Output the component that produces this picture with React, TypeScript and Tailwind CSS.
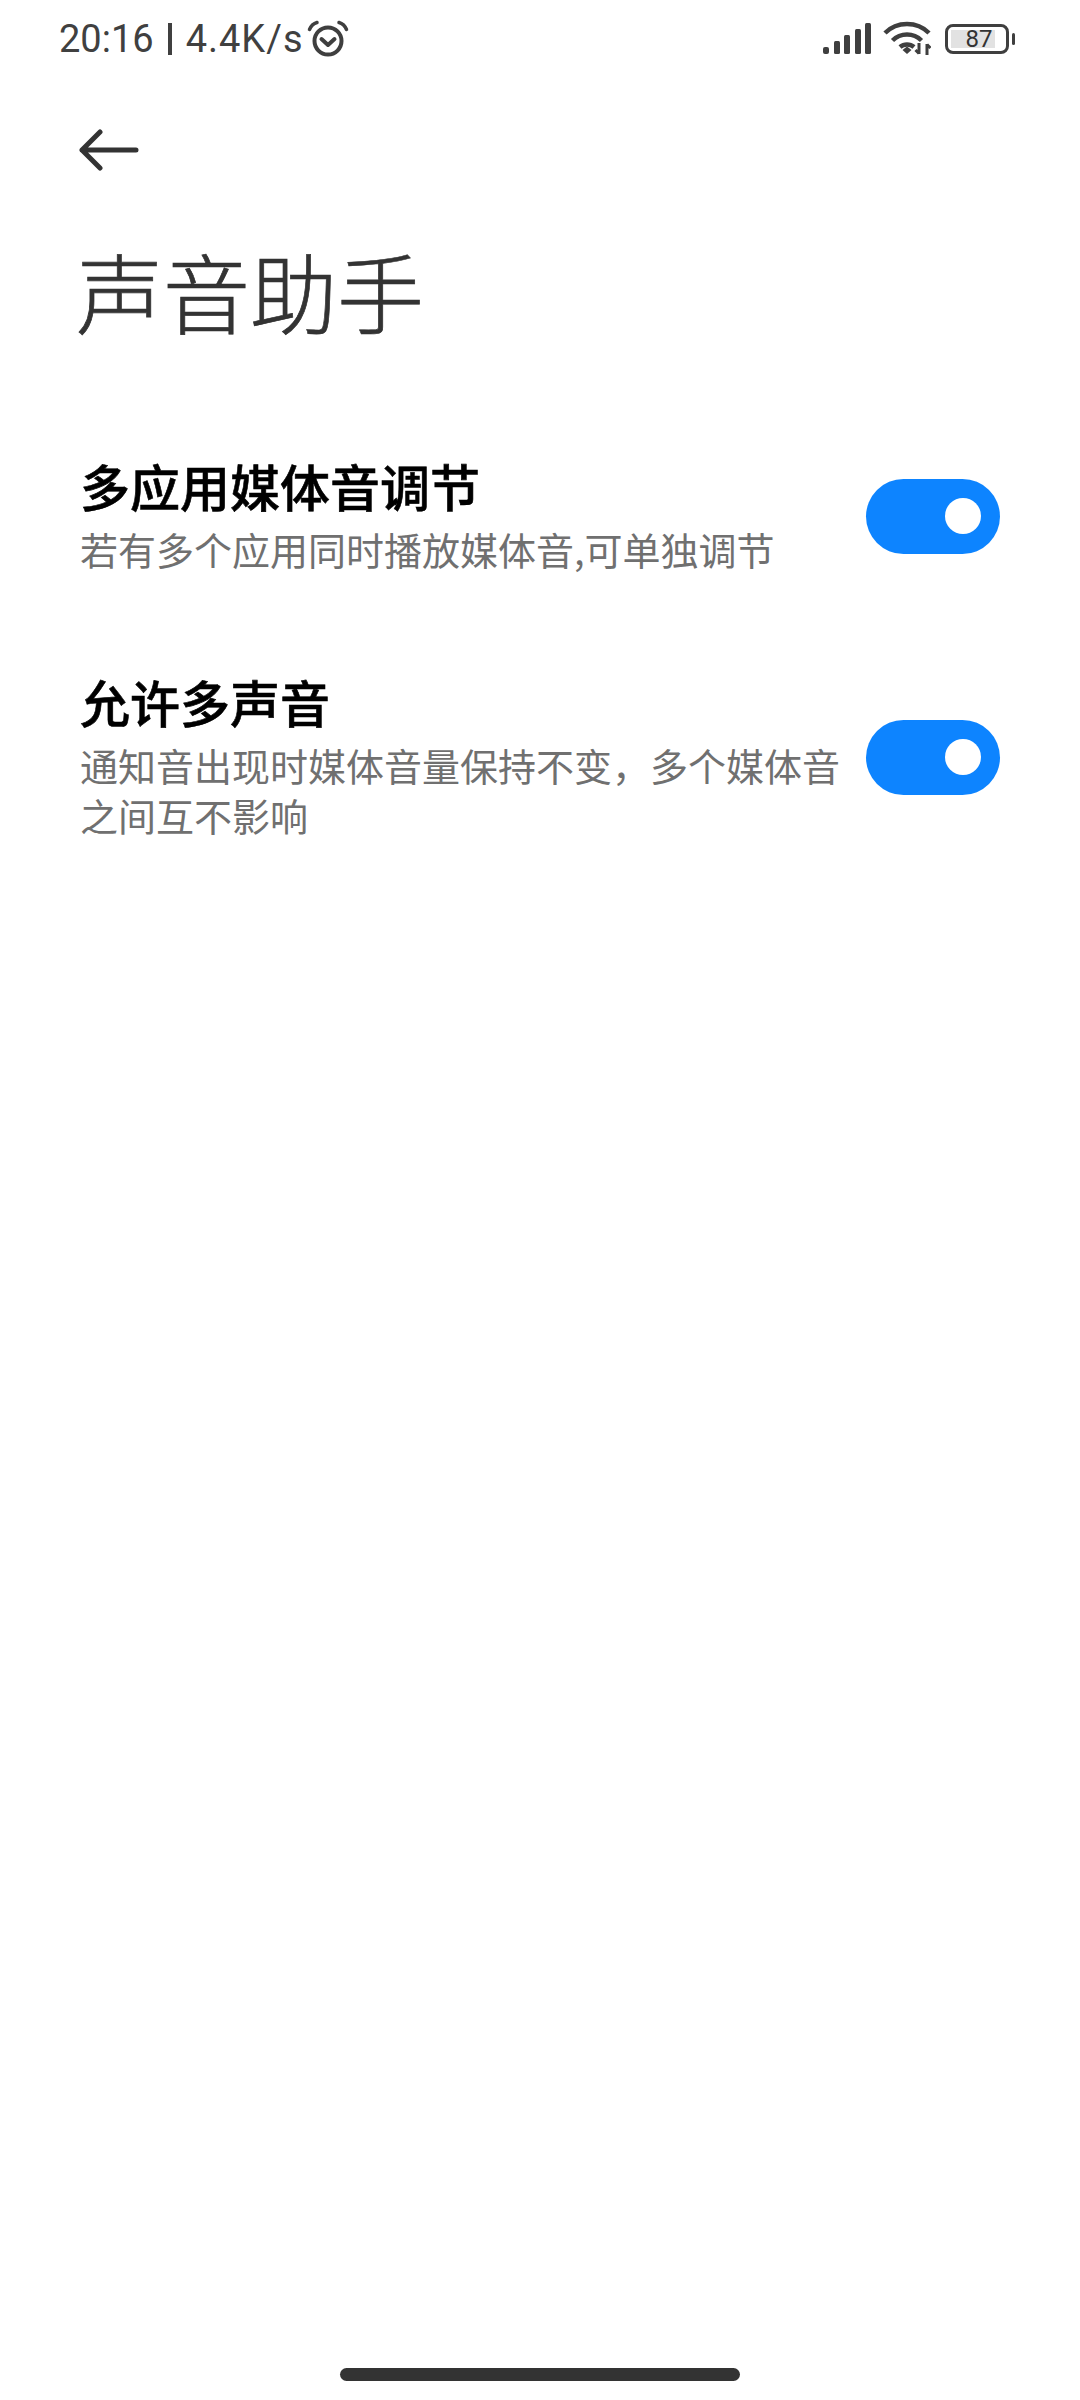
const cjk = "font-['Noto_Sans_CJK_SC','Noto_Sans',sans-serif]";

function AlarmIcon() {
  return (
    <svg width="42" height="38" viewBox="0 0 42 38" fill="none" stroke="#3f3f3f" strokeLinecap="round" className="block">
      <circle cx="21" cy="21" r="13.5" strokeWidth="4" />
      <path d="M14.5 19l6.5 6 6.5-6" strokeWidth="4" strokeLinejoin="round" />
      <path d="M2.5 9.5C4 6 6.500 3.500 10 2.500M39.500 9.500C38 6 35.500 3.500 32 2.500" strokeWidth="3.500" />
    </svg>
  );
}

function SignalIcon() {
  return (
    <svg width="48" height="32" viewBox="0 0 48 32" fill="#3f3f3f" className="block">
      <rect x="0" y="24" width="6" height="7" rx="2" />
      <rect x="11" y="18" width="6" height="13" rx="1.500" />
      <rect x="21" y="12" width="6" height="19" rx="1.500" />
      <rect x="32" y="6" width="6" height="25" rx="1.500" />
      <rect x="42" y="0" width="6" height="31" rx="1.500" />
    </svg>
  );
}

function WifiIcon() {
  return (
    <svg width="48" height="36" viewBox="0 0 48 36" fill="none" stroke="#3f3f3f" strokeWidth="4.500" className="block">
      <path d="M2 12C14 0 34 0 46 12" />
      <path d="M9.500 19.500C17.500 11.500 30.500 11.500 38.500 19.500" />
      <path d="M17 26C21 22.500 27 22.500 31 26" />
      <path d="M19.500 29L24 25.500L28.500 29L24 33Z" fill="#3f3f3f" stroke="none" />
      <path d="M36 22v11M32.500 29l3.500 3.500M44 34V23M47.500 27L44 23.500" strokeWidth="3" />
    </svg>
  );
}

function Battery() {
  return (
    <div className="flex items-center gap-[3px]">
      <div className="flex h-[30px] w-[64px] items-center rounded-[8px] border-[3px] border-[#3f3f3f] p-[3px]">
        <div className="flex h-full w-[44px] items-center justify-center bg-[#e2e2e2] pl-[12px] text-[24px] leading-none text-[#333] font-['Roboto',sans-serif]">
          87
        </div>
      </div>
      <div className="h-[12px] w-[3px] rounded-full bg-[#3f3f3f]" />
    </div>
  );
}

function Toggle({ className = "" }: { className?: string }) {
  return (
    <div className={`flex h-[75px] w-[134px] shrink-0 items-center justify-end rounded-full bg-[#0d84ff] pr-[19px] ${className}`}>
      <div className="h-[36px] w-[36px] rounded-full bg-white" />
    </div>
  );
}

function SettingRow({
  title,
  desc,
  className,
  toggleClass,
}: {
  title: string;
  desc: string;
  className: string;
  toggleClass?: string;
}) {
  return (
    <div className={`flex items-center justify-between pl-[80px] pr-[80px] ${className}`}>
      <div className="w-[770px]">
        <div className="text-[50px] font-medium leading-[60px] text-black [-webkit-text-stroke:0.6px_black]">{title}</div>
        <div className="mt-[9px] text-[38px] leading-[50px] text-[#707070]">{desc}</div>
      </div>
      <Toggle className={toggleClass} />
    </div>
  );
}

export default function App() {
  return (
    <div className={`relative flex h-[2400px] w-[1080px] flex-col bg-white ${cjk}`}>
      <div className="flex h-[76px] items-center justify-between pl-[59px] pr-[65px] pt-[2px]">
        <div className="flex items-center font-['Roboto',sans-serif] text-[38px] leading-none text-[#404040]">
          <span>20:16</span>
          <span className="mx-[14px] h-[32px] w-[4px] bg-[#404040]" />
          <span className="tracking-[1px]">4.4K/s</span>
          <span className="ml-[3px]">
            <AlarmIcon />
          </span>
        </div>
        <div className="flex items-center gap-[12px]">
          <SignalIcon />
          <WifiIcon />
          <span className="ml-[2px]">
            <Battery />
          </span>
        </div>
      </div>

      <div className="pl-[79px] pt-[53px]">
        <svg width="60" height="42" viewBox="0 0 60 42" fill="none" stroke="#333" strokeWidth="5" strokeLinecap="round" strokeLinejoin="round" className="block">
          <path d="M57 21H3M21 3L3 21L21 39" />
        </svg>
      </div>

      <h1 className="mt-[59px] pl-[76px] text-[87px] font-light leading-[120px] text-[#333] [-webkit-text-stroke:0.7px_#333]">声音助手</h1>

      <SettingRow
        className="mt-[105px]"
        toggleClass="mt-[3px]"
        title="多应用媒体音调节"
        desc="若有多个应用同时播放媒体音,可单独调节"
      />
      <SettingRow
        className="mt-[97px]"
        toggleClass="mt-[3px]"
        title="允许多声音"
        desc="通知音出现时媒体音量保持不变，多个媒体音之间互不影响"
      />

      <div className="absolute bottom-[19px] left-[340px] h-[13px] w-[400px] rounded-full bg-[#333]" />
    </div>
  );
}
